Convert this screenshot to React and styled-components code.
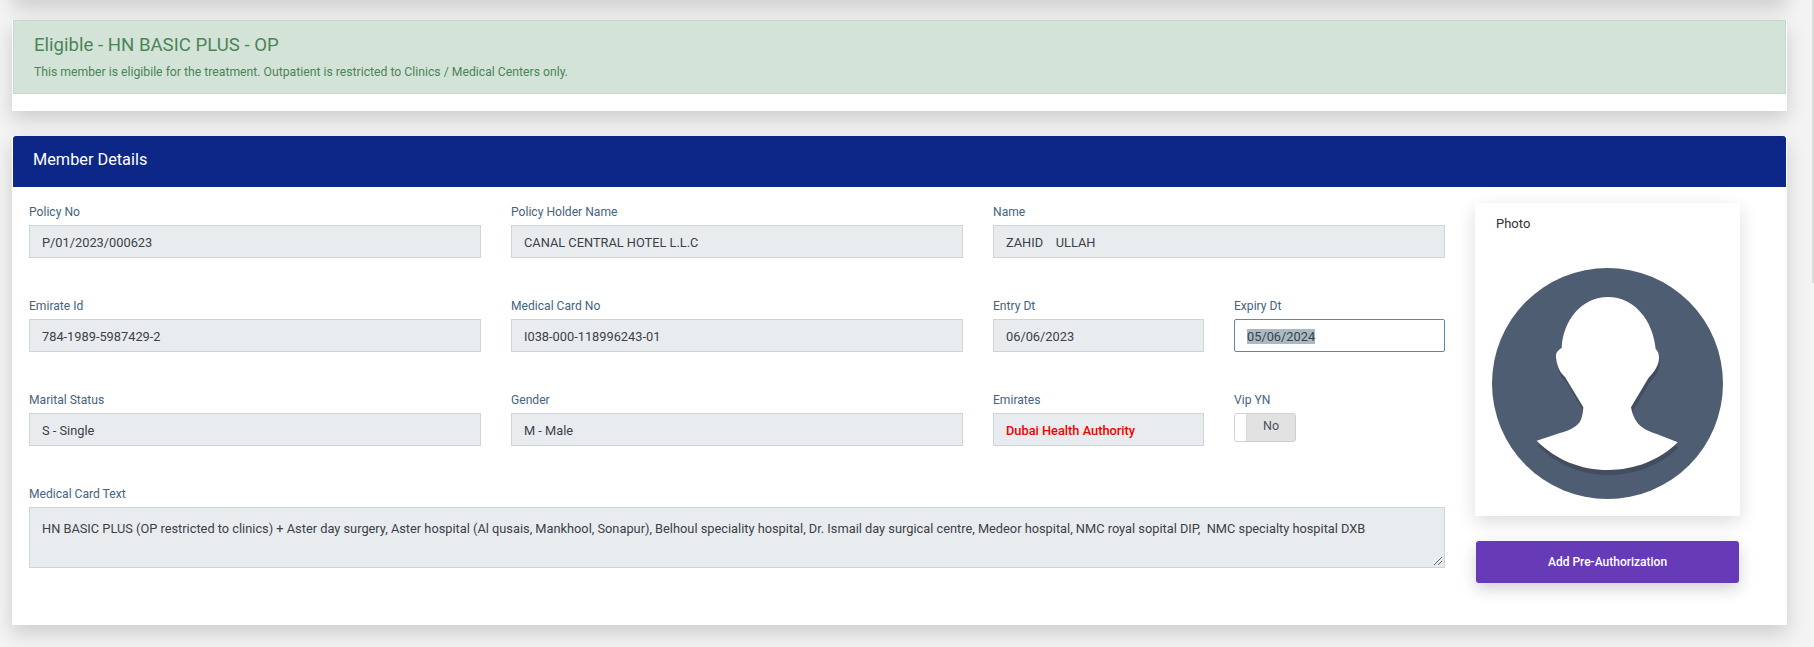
import React from "react";
import styled, { createGlobalStyle } from "styled-components";

// Global page reset
const GlobalStyle = createGlobalStyle`
  html, body {
    margin: 0;
    padding: 0;
    height: 647px;
    overflow: hidden;
    background: #f3f3f3;
    font-family: Roboto, "Liberation Sans", sans-serif;
  }
  * { box-sizing: border-box; }
`;

const FIELD_ROWS = [
  [
    { label: "Policy No", value: "P/01/2023/000623" },
    { label: "Policy Holder Name", value: "CANAL CENTRAL HOTEL L.L.C" },
    { label: "Name", value: "ZAHID    ULLAH" },
  ],
  [
    { label: "Emirate Id", value: "784-1989-5987429-2" },
    { label: "Medical Card No", value: "I038-000-118996243-01" },
    [
      { label: "Entry Dt", value: "06/06/2023" },
      { label: "Expiry Dt", value: "05/06/2024", focused: true },
    ],
  ],
  [
    { label: "Marital Status", value: "S - Single" },
    { label: "Gender", value: "M - Male" },
    [
      { label: "Emirates", value: "Dubai Health Authority", alert: true },
      { label: "Vip YN", toggle: "No" },
    ],
  ],
];

const CARD_TEXT =
  "HN BASIC PLUS (OP restricted to clinics) + Aster day surgery, Aster hospital (Al qusais, Mankhool, Sonapur), Belhoul speciality hospital, Dr. Ismail day surgical centre, Medeor hospital, NMC royal sopital DIP,  NMC specialty hospital DXB";

const SILHOUETTE =
  "M116 29 C90 29 71 52 69.7 80 C66 82 63.5 85 64 89 C64.5 95 66 99 68 103 C69 105 71 107 73 109 L91.3 139.3 C91 145 90 150 88 153.7 C83 160 76 163 68 165 L44.7 172.7 C64 192 89 202 116 202 C143 202 168 192 185.7 174.3 L164.7 166 C156 163 149 160 144.7 153.7 C142 150 140 145 139 139.3 L156.3 110.3 C158 108 161 105 163 102 C165 98 167 95 167 90 C167 86 166 83 163.7 81 C161 52 142 29 116 29 Z";

function Field({ field }) {
  return (
    <FieldBox>
      <FieldLabel>{field.label}</FieldLabel>
      {field.toggle ? (
        <Toggle>
          <ToggleHandle />
          <ToggleText>{field.toggle}</ToggleText>
        </Toggle>
      ) : (
        <FieldValue $focused={field.focused} $alert={field.alert}>
          {field.focused ? <Selected>{field.value}</Selected> : field.value}
        </FieldValue>
      )}
    </FieldBox>
  );
}

// Page: Member details
export default function App() {
  return (
    <>
      <GlobalStyle />
      <Page>
        <PreviousCard />
        <AlertCard>
          <Alert>
            <AlertTitle>Eligible - HN BASIC PLUS - OP</AlertTitle>
            <AlertText>
              This member is eligibile for the treatment. Outpatient is restricted to Clinics / Medical Centers only.
            </AlertText>
          </Alert>
        </AlertCard>

        <DetailsCard>
          <Header>Member Details</Header>
          <Body>
            <Form>
              {FIELD_ROWS.map((row, i) => (
                <Row key={i}>
                  {row.map((item, j) =>
                    Array.isArray(item) ? (
                      <SplitCell key={j}>
                        {item.map((field) => (
                          <Field key={field.label} field={field} />
                        ))}
                      </SplitCell>
                    ) : (
                      <Field key={item.label} field={item} />
                    )
                  )}
                </Row>
              ))}
              <FieldBox>
                <FieldLabel>Medical Card Text</FieldLabel>
                <TextArea>
                  {CARD_TEXT}
                  <Grip width="10" height="10" viewBox="0 0 10 10">
                    <path d="M1 9 L9 1 M5 9 L9 5" stroke="#666" strokeWidth="1" fill="none" />
                  </Grip>
                </TextArea>
              </FieldBox>
            </Form>

            <Side>
              <PhotoCard>
                <PhotoTitle>Photo</PhotoTitle>
                <Avatar viewBox="0 0 231 231">
                  <circle cx="115.5" cy="115.5" r="115.5" fill="#4f5d73" />
                  <path d={SILHOUETTE} fill="#434d60" transform="translate(1 5)" />
                  <path d={SILHOUETTE} fill="#fff" />
                </Avatar>
              </PhotoCard>
              <AddButton>Add Pre-Authorization</AddButton>
            </Side>
          </Body>
        </DetailsCard>
      </Page>
      <ScrollTrack>
        <ScrollThumb />
      </ScrollTrack>
    </>
  );
}

// Element: Page
const Page = styled.div`
  width: 1787px;
  padding-left: 12px;
  display: flex;
  flex-direction: column;
`;

// Element: PreviousCard (bottom edge of the card scrolled out of view)
const PreviousCard = styled.div`
  height: 20px;
  margin-top: -20px;
  background: #fff;
  box-shadow: 0 8px 18px rgba(0, 0, 0, 0.16);
`;

// Element: AlertCard
const AlertCard = styled.div`
  margin-top: 20px;
  height: 91px;
  background: #fff;
  box-shadow: 0 8px 18px rgba(0, 0, 0, 0.16);
`;

// Element: Alert
const Alert = styled.div`
  height: 74px;
  margin: 0 1px;
  padding: 12px 20px 0;
  background: #d4e3d8;
  border: 1px solid #c5d8ca;
  color: #4a8558;
`;

// Element: AlertTitle
const AlertTitle = styled.div`
  font-size: 18.6px;
  line-height: 24px;
`;

// Element: AlertText
const AlertText = styled.div`
  margin-top: 8px;
  font-size: 12.23px;
  line-height: 14px;
`;

// Element: DetailsCard
const DetailsCard = styled.div`
  margin-top: 25px;
  height: 489px;
  background: #fff;
  box-shadow: 0 8px 18px rgba(0, 0, 0, 0.16);
`;

// Element: Header
const Header = styled.div`
  height: 51px;
  margin: 0 1px;
  padding: 0 0 4px 20px;
  display: flex;
  align-items: center;
  background: #0c2788;
  border-radius: 3px 3px 0 0;
  color: #fff;
  font-size: 16.3px;
  font-weight: 400;
`;

// Element: Body
const Body = styled.div`
  display: flex;
  padding: 16px 46px 0 17px;
  gap: 30px;
`;

// Element: Form
const Form = styled.div`
  width: 1416px;
  display: flex;
  flex-direction: column;
`;

// Element: Row
const Row = styled.div`
  display: grid;
  grid-template-columns: repeat(3, 452px);
  gap: 30px;
  height: 94px;
`;

// Element: SplitCell
const SplitCell = styled.div`
  display: grid;
  grid-template-columns: 211px 211px;
  gap: 30px;
`;

// Element: FieldBox
const FieldBox = styled.div`
  display: flex;
  flex-direction: column;
`;

// Element: FieldLabel
const FieldLabel = styled.label`
  height: 22px;
  font-size: 12.1px;
  line-height: 19px;
  color: #456380;
`;

// Element: FieldValue
const FieldValue = styled.div`
  height: 33px;
  padding: 2px 12px 0;
  display: flex;
  align-items: center;
  white-space: pre;
  font-size: 12.8px;
  font-weight: ${(p) => (p.$alert ? 500 : 400)};
  color: ${(p) => (p.$alert ? "#f00000" : "#3b4147")};
  background: ${(p) => (p.$focused ? "#fff" : "#e9ecef")};
  border: 1px solid ${(p) => (p.$focused ? "#5f87ad" : "#ced4da")};
  border-radius: ${(p) => (p.$focused ? "2px" : "0")};
`;

// Element: Selected
const Selected = styled.span`
  background: #a9bac4;
`;

// Element: Toggle
const Toggle = styled.div`
  width: 62px;
  height: 29px;
  display: flex;
  background: #e2e2e2;
  border: 1px solid #cfcfcf;
  border-radius: 3px;
  overflow: hidden;
`;

// Element: ToggleHandle
const ToggleHandle = styled.div`
  width: 12px;
  background: #fff;
  border-right: 1px solid #d6d6d6;
`;

// Element: ToggleText
const ToggleText = styled.div`
  flex: 1;
  text-align: center;
  font-size: 12.5px;
  line-height: 23px;
  color: #495057;
`;

// Element: TextArea
const TextArea = styled.div`
  position: relative;
  height: 61px;
  padding: 12px 12px 0;
  white-space: pre-wrap;
  font-size: 12.8px;
  line-height: 18px;
  color: #3b4147;
  background: #e9ecef;
  border: 1px solid #ced4da;
`;

// Element: Grip
const Grip = styled.svg`
  position: absolute;
  right: 1px;
  bottom: 1px;
`;

// Element: Side
const Side = styled.div`
  width: 265px;
  display: flex;
  flex-direction: column;
`;

// Element: PhotoCard
const PhotoCard = styled.div`
  height: 313px;
  padding: 14px 17px 0;
  background: #fff;
  box-shadow: 0 6px 18px rgba(0, 0, 0, 0.14);
`;

// Element: PhotoTitle
const PhotoTitle = styled.div`
  margin-left: 4px;
  height: 51px;
  font-size: 13px;
  line-height: 14px;
  color: #333;
`;

// Element: Avatar
const Avatar = styled.svg`
  display: block;
  width: 231px;
  height: 231px;
`;

// Element: AddButton
const AddButton = styled.button`
  margin: 25px 1px 0;
  height: 42px;
  border: 0;
  border-radius: 3px;
  background: #673ab7;
  color: #fff;
  font-family: inherit;
  font-size: 12px;
  font-weight: 500;
  box-shadow: 0 6px 16px rgba(0, 0, 0, 0.18);
`;

// Element: ScrollTrack
const ScrollTrack = styled.div`
  position: fixed;
  top: 0;
  right: 0;
  bottom: 0;
  width: 2px;
  background: #f6f6f6;
`;

// Element: ScrollThumb
const ScrollThumb = styled.div`
  height: 283px;
  background: #dcdcdc;
`;
